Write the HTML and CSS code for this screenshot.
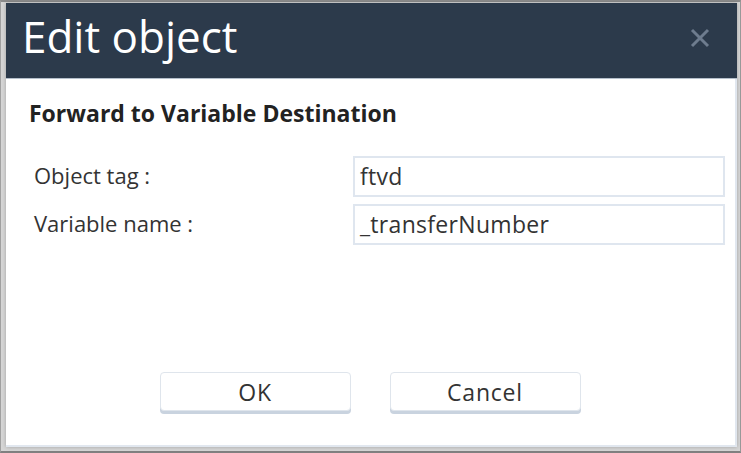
FILE: index.html
```html
<!DOCTYPE html>
<html>
<head>
<meta charset="utf-8">
<link rel="stylesheet" href="styles.css">
</head>
<body>
<div class="frame">
  <div class="dialog">
    <div class="header">
      <h1 class="title">Edit object</h1>
      <svg class="close" width="20" height="20" viewBox="0 0 20 20" aria-label="Close">
        <path d="M2 2 L18 18 M18 2 L2 18" stroke="#6e7c8e" stroke-width="3" stroke-linecap="butt" fill="none"/>
      </svg>
    </div>
    <div class="content">
      <h2 class="subtitle">Forward to Variable Destination</h2>
      <div class="form">
        <label class="label">Object tag :</label>
        <div class="input">ftvd</div>
        <label class="label">Variable name :</label>
        <div class="input">_transferNumber</div>
      </div>
      <div class="footer">
        <button class="btn">OK</button>
        <button class="btn">Cancel</button>
      </div>
    </div>
  </div>
</div>
</body>
</html>
```

FILE: styles.css
```css
html, body {
  margin: 0;
  padding: 0;
}
body {
  width: 741px;
  height: 453px;
  overflow: hidden;
  font-family: "Open Sans", Lato, "Liberation Sans", sans-serif;
}
.frame {
  box-sizing: border-box;
  width: 741px;
  height: 453px;
  border-top: 2px solid #8c8c8c;
  border-left: 1px solid #a0a0a0;
  border-right: 1px solid #9a9a9a;
  border-bottom: 2px solid #808080;
  background: #d6d6d6;
  padding: 1px 5px 4px 5px;
  display: flex;
}
.dialog {
  flex: 1;
  display: flex;
  flex-direction: column;
  background: #fff;
  box-shadow: 0 0 4px rgba(0, 0, 0, 0.25);
}
.header {
  box-sizing: border-box;
  height: 76px;
  background: #2c3a4b;
  border-bottom: 1px solid #b5bfcb;
  display: flex;
  align-items: center;
  justify-content: space-between;
  padding: 0 27px 8px 16px;
}
.title {
  margin: 0;
  font-weight: 400;
  font-size: 44px;
  line-height: 67px;
  color: #ffffff;
}
.close {
  display: block;
  margin-top: 3px;
}
.content {
  flex: 1;
  display: flex;
  flex-direction: column;
  padding: 21px 10px 0 23px;
  border-right: 2px solid #e1e7ef;
  border-bottom: 2px solid #e1e7ef;
}
.subtitle {
  margin: 0;
  font-size: 23px;
  line-height: 26px;
  font-weight: 700;
  color: #222;
}
.form {
  display: grid;
  grid-template-columns: 324px 372px;
  grid-auto-rows: 41px;
  row-gap: 7px;
  margin-top: 30px;
}
.label {
  padding-left: 5px;
  font-size: 22px;
  line-height: 38px;
  color: #333;
}
.input {
  box-sizing: border-box;
  border: 2px solid #dfe6ef;
  padding: 0 5px;
  font-size: 23px;
  letter-spacing: 0.3px;
  line-height: 36px;
  color: #333;
}
.footer {
  display: flex;
  justify-content: center;
  gap: 39px;
  margin-top: 127px;
  padding-right: 14px;
}
.btn {
  box-sizing: border-box;
  width: 191px;
  height: 39px;
  background: #fff;
  border: 1px solid #dfe5ec;
  border-radius: 4px;
  box-shadow: 0 3px 0 #c9d3df;
  font-family: "Open Sans", Lato, "Liberation Sans", sans-serif;
  font-size: 23px;
  letter-spacing: 0.8px;
  color: #333;
  padding: 0;
}
```
